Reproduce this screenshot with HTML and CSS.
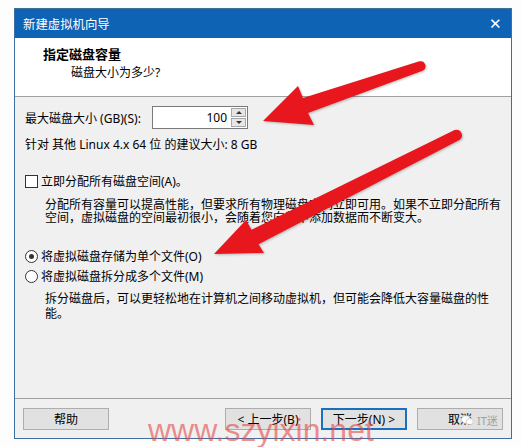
FILE: index.html
```html
<!DOCTYPE html>
<html lang="zh-CN">
<head>
    <meta charset="UTF-8">
    <title>新建虚拟机向导</title>
    <link rel="stylesheet" href="styles.css">
</head>
<body>
    <div class="window">
        <div class="title-bar">
            <span class="title">新建虚拟机向导</span>
            <span class="close">&#x2715;</span>
        </div>
        <div class="header">
            <div class="header-title">指定磁盘容量</div>
            <div class="header-sub">磁盘大小为多少?</div>
        </div>
        <div class="content">
            <div class="size-row">
                <label class="size-label" for="size">最大磁盘大小 (GB)(S):</label>
                <div class="spin">
                    <input type="text" id="size" value="100">
                    <div class="spin-btns">
                        <span class="spin-up"></span>
                        <span class="spin-down"></span>
                    </div>
                </div>
            </div>
            <div class="hint">针对 其他 Linux 4.x 64 位 的建议大小: 8 GB</div>
            <div class="check-row">
                <span class="checkbox"></span>
                <span>立即分配所有磁盘空间(A)。</span>
            </div>
            <div class="desc desc-first">分配所有容量可以提高性能，但要求所有物理磁盘空间立即可用。如果不立即分配所有空间，虚拟磁盘的空间最初很小，会随着您向其中添加数据而不断变大。</div>
            <div class="radio-row radio-first">
                <span class="radio checked"></span>
                <span>将虚拟磁盘存储为单个文件(O)</span>
            </div>
            <div class="radio-row">
                <span class="radio"></span>
                <span>将虚拟磁盘拆分成多个文件(M)</span>
            </div>
            <div class="desc desc-second">拆分磁盘后，可以更轻松地在计算机之间移动虚拟机，但可能会降低大容量磁盘的性能。</div>
        </div>
        <div class="footer">
            <button type="button" class="btn">帮助</button>
            <div class="spacer"></div>
            <button type="button" class="btn">&lt; 上一步(B)</button>
            <button type="button" class="btn btn-default">下一步(N) &gt;</button>
            <button type="button" class="btn">取消</button>
        </div>
    </div>

    <div class="watermark">www.szyixin.net</div>
    <div class="wechat-mark">
        <svg width="13" height="11" viewBox="0 0 13 11">
            <ellipse cx="5" cy="4.5" rx="4.5" ry="3.8" fill="#fff" stroke="#c8c8c8" stroke-width="0.8"/>
            <ellipse cx="8.6" cy="6.6" rx="3.6" ry="3" fill="#fff" stroke="#c8c8c8" stroke-width="0.8"/>
        </svg>
        <span>IT迷</span>
    </div>

    <svg class="arrows" width="521" height="447" viewBox="0 0 521 447">
        <path d="M263 121 L298 86 L303 98 L419.4 61.3 A5 5 0 0 1 422.6 70.7 L308 113 L314 125 Z" fill="#e8161d"/>
        <path d="M214 254 L246 220 L251.5 229.8 L454.6 130.1 A5.5 5.5 0 0 1 459.4 139.9 L258.5 244.2 L264 253 Z" fill="#e8161d"/>
    </svg>
</body>
</html>
```

FILE: styles.css
```css
/* dialog styling */
body {
    margin: 0;
    padding: 8px 0 0 14px;
    background: #fdfdfd;
    font-family: "Noto Sans", "Noto Sans CJK SC", sans-serif;
    font-size: 12px;
    color: #000;
    position: relative;
    width: 507px;
    height: 439px;
    overflow: hidden;
}
.window {
    width: 496px;
    border: 1px solid #3f6f9f;
    background: #f0f0f0;
}
.title-bar {
    height: 29px;
    background: #0f63b5;
    color: #fff;
    display: flex;
    align-items: center;
    justify-content: space-between;
    padding: 0 9px 0 8px;
}
.title {
    font-size: 12.4px;
}
.close {
    font-size: 15px;
    line-height: 1;
}
.header {
    height: 59px;
    background: #fff;
    border-bottom: 1px solid #a0a0a0;
    padding: 8px 0 0 28px;
    box-sizing: border-box;
}
.header-title {
    font-size: 13px;
    font-weight: bold;
    line-height: 17px;
}
.header-sub {
    padding-left: 28px;
    line-height: 16px;
    margin-top: 2px;
}
.content {
    height: 301px;
    padding: 9px 0 0 10px;
    box-sizing: border-box;
}
.size-row {
    display: flex;
    align-items: center;
    height: 23px;
}
.size-label {
    width: 127px;
}
.spin {
    display: flex;
    width: 96px;
    height: 23px;
    border: 1px solid #7a7a7a;
    background: #fff;
    box-sizing: border-box;
}
.spin input {
    width: 74px;
    border: none;
    outline: none;
    padding: 0 3px 0 0;
    text-align: right;
    font-family: inherit;
    font-size: 12px;
    background: transparent;
}
.spin-btns {
    display: flex;
    flex-direction: column;
    gap: 1px;
    margin: 1px 1px 1px auto;
    width: 15px;
}
.spin-up,
.spin-down {
    flex: 1;
    background: #e6e6e6;
    border: 1px solid #a8a8a8;
    position: relative;
}
.spin-up::after,
.spin-down::after {
    content: "";
    position: absolute;
    left: 4px;
    top: 2px;
    border-left: 3px solid transparent;
    border-right: 3px solid transparent;
}
.spin-up::after {
    border-bottom: 3px solid #333;
}
.spin-down::after {
    border-top: 3px solid #333;
}
.hint {
    margin-top: 8px;
    line-height: 15px;
}
.check-row,
.radio-row {
    display: flex;
    align-items: center;
    gap: 3px;
    height: 16px;
}
.check-row {
    margin-top: 21px;
}
.checkbox {
    width: 11px;
    height: 11px;
    border: 1px solid #333;
    background: #fff;
}
.radio {
    width: 11px;
    height: 11px;
    border: 1px solid #333;
    border-radius: 50%;
    background: #fff;
    position: relative;
}
.radio.checked::after {
    content: "";
    position: absolute;
    left: 3px;
    top: 3px;
    width: 5px;
    height: 5px;
    border-radius: 50%;
    background: #333;
}
.desc {
    padding-left: 20px;
    font-size: 12px;
}
.desc-first {
    margin-top: 9px;
    line-height: 13px;
}
.radio-first {
    margin-top: 24px;
}
.radio-row + .radio-row {
    margin-top: 4px;
}
.desc-second {
    margin-top: 7px;
    line-height: 15px;
    padding-right: 20px;
}
.footer {
    height: 40px;
    border-top: 1px solid #a0a0a0;
    display: flex;
    align-items: flex-start;
    gap: 10px;
    padding: 9px 8px 0 8px;
    box-sizing: border-box;
}
.spacer {
    flex: 1;
}
.btn {
    width: 86px;
    height: 22px;
    background: #e1e1e1;
    border: 1px solid #adadad;
    font-family: inherit;
    font-size: 12px;
    color: #000;
    padding: 0;
}
.btn-default {
    border: 2px solid #1a70bd;
}
.watermark {
    position: absolute;
    left: 148px;
    top: 414px;
    font-family: "Liberation Sans", sans-serif;
    font-size: 32px;
    line-height: 32px;
    color: rgba(226, 70, 70, 0.6);
}
.wechat-mark {
    position: absolute;
    left: 461px;
    top: 412px;
    display: flex;
    align-items: center;
    gap: 3px;
    color: #a0a0a0;
    font-size: 11px;
}
.arrows {
    position: absolute;
    left: 0;
    top: 0;
    pointer-events: none;
    filter: drop-shadow(1px 1px 1px rgba(0, 0, 0, 0.25));
}
```
